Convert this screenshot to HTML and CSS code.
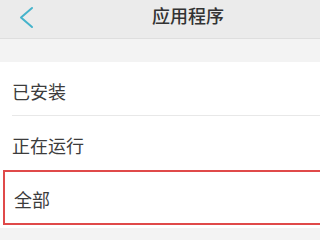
FILE: index.html
```html
<!DOCTYPE html>
<html>
  <head>
    <meta name="viewport" content="width=device-width,initial-scale=1.0">
    <title>应用程序</title>
    <link rel="stylesheet" href="styles.css">
  </head>
  <body>
    <div class="top-bar">
      <svg class="back-icon" width="16" height="24" viewBox="0 0 16 24">
        <polyline points="13,3 2,12.5 13,22" fill="none" stroke="#45b3cb" stroke-width="2" stroke-linecap="round" stroke-linejoin="round"/>
      </svg>
      <div class="top-title">应用程序</div>
    </div>

    <div class="spacer"></div>

    <div class="app-list">
      <div class="app-row">已安装</div>
      <div class="app-divider"></div>
      <div class="app-row">正在运行</div>
      <div class="app-row selected">全部</div>
    </div>
  </body>
</html>
```

FILE: styles.css
```css
body {
  margin: 0;
  padding: 0;
  width: 320px;
  height: 240px;
  overflow: hidden;
  background: #f3f3f3;
  font-family: "Noto Sans CJK SC", "Noto Sans", sans-serif;
}

.top-bar {
  display: flex;
  align-items: center;
  height: 38px;
  background: #ebebeb;
  border-bottom: 1px solid #dedede;
}

.back-icon {
  display: block;
  margin-left: 19px;
  margin-top: -5px;
}

.top-title {
  margin-left: 117px;
  margin-top: -8px;
  font-size: 18px;
  line-height: 18px;
  font-weight: 500;
  color: #333;
}

.spacer {
  height: 23px;
}

.app-list {
  background: #fff;
  padding-bottom: 3px;
}

.app-row {
  box-sizing: border-box;
  height: 53px;
  padding: 20px 12px 15px;
  font-size: 18px;
  line-height: 18px;
  color: #3c3c3c;
}

.app-divider {
  height: 1px;
  margin-left: 12px;
  background: #e8e8e8;
}

.app-row.selected {
  height: 55px;
  margin: 1px -10px 0 3px;
  padding: 18px 9px 0;
  border: 2px solid #e04a4a;
}
```
